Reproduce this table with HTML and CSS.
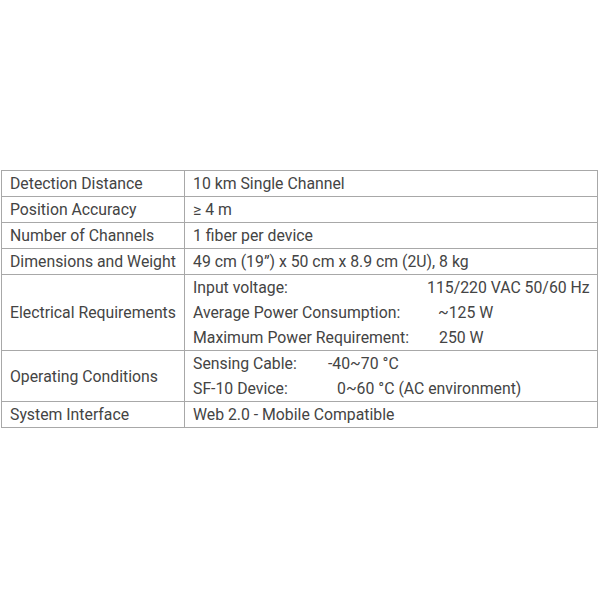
FILE: index.html
```html
<!DOCTYPE html>
<html>
<head>
<meta charset="utf-8">
<link rel="stylesheet" href="styles.css">
</head>
<body>
<div class="page">
<table class="spec">
<colgroup><col class="col-key"><col class="col-val"></colgroup>
<tr><td class="key">Detection Distance</td><td class="val">10 km Single Channel</td></tr>
<tr><td class="key">Position Accuracy</td><td class="val">≥ 4 m</td></tr>
<tr><td class="key">Number of Channels</td><td class="val">1 fiber per device</td></tr>
<tr><td class="key">Dimensions and Weight</td><td class="val">49 cm (19”) x 50 cm x 8.9 cm (2U), 8 kg</td></tr>
<tr><td class="key">Electrical Requirements</td><td class="val">
<div class="line"><span class="lbl lbl-in">Input voltage:</span><span>115/220 VAC 50/60 Hz</span></div>
<div class="line"><span class="lbl lbl-avg">Average Power Consumption:</span><span>~125 W</span></div>
<div class="line"><span class="lbl lbl-max">Maximum Power Requirement:</span><span>250 W</span></div>
</td></tr>
<tr><td class="key">Operating Conditions</td><td class="val">
<div class="line"><span class="lbl lbl-cable">Sensing Cable:</span><span>-40~70 °C</span></div>
<div class="line"><span class="lbl lbl-dev">SF-10 Device:</span><span>0~60 °C (AC environment)</span></div>
</td></tr>
<tr><td class="key">System Interface</td><td class="val">Web 2.0 - Mobile Compatible</td></tr>
</table>
</div>
</body>
</html>
```
FILE: styles.css
```css
html, body {
  margin: 0;
  padding: 0;
  background: #ffffff;
}
.page {
  padding: 170px 0 0 1px;
}
.spec {
  border-collapse: collapse;
  table-layout: fixed;
  width: 597px;
  font-family: Roboto, "Liberation Sans", sans-serif;
  font-size: 15.8px;
  line-height: 25px;
  color: #444444;
}
.col-key { width: 183px; }
.spec td {
  border: 1px solid #a8a8a8;
  padding: 0 6px 0 8px;
  vertical-align: middle;
  white-space: nowrap;
  overflow: visible;
}
.line {
  display: flex;
  height: 25px;
}
.lbl {
  display: inline-block;
  flex: none;
}
.lbl-in { width: 234px; }
.lbl-avg { width: 245px; }
.lbl-max { width: 246px; }
.lbl-cable { width: 135px; }
.lbl-dev { width: 144px; }
```
